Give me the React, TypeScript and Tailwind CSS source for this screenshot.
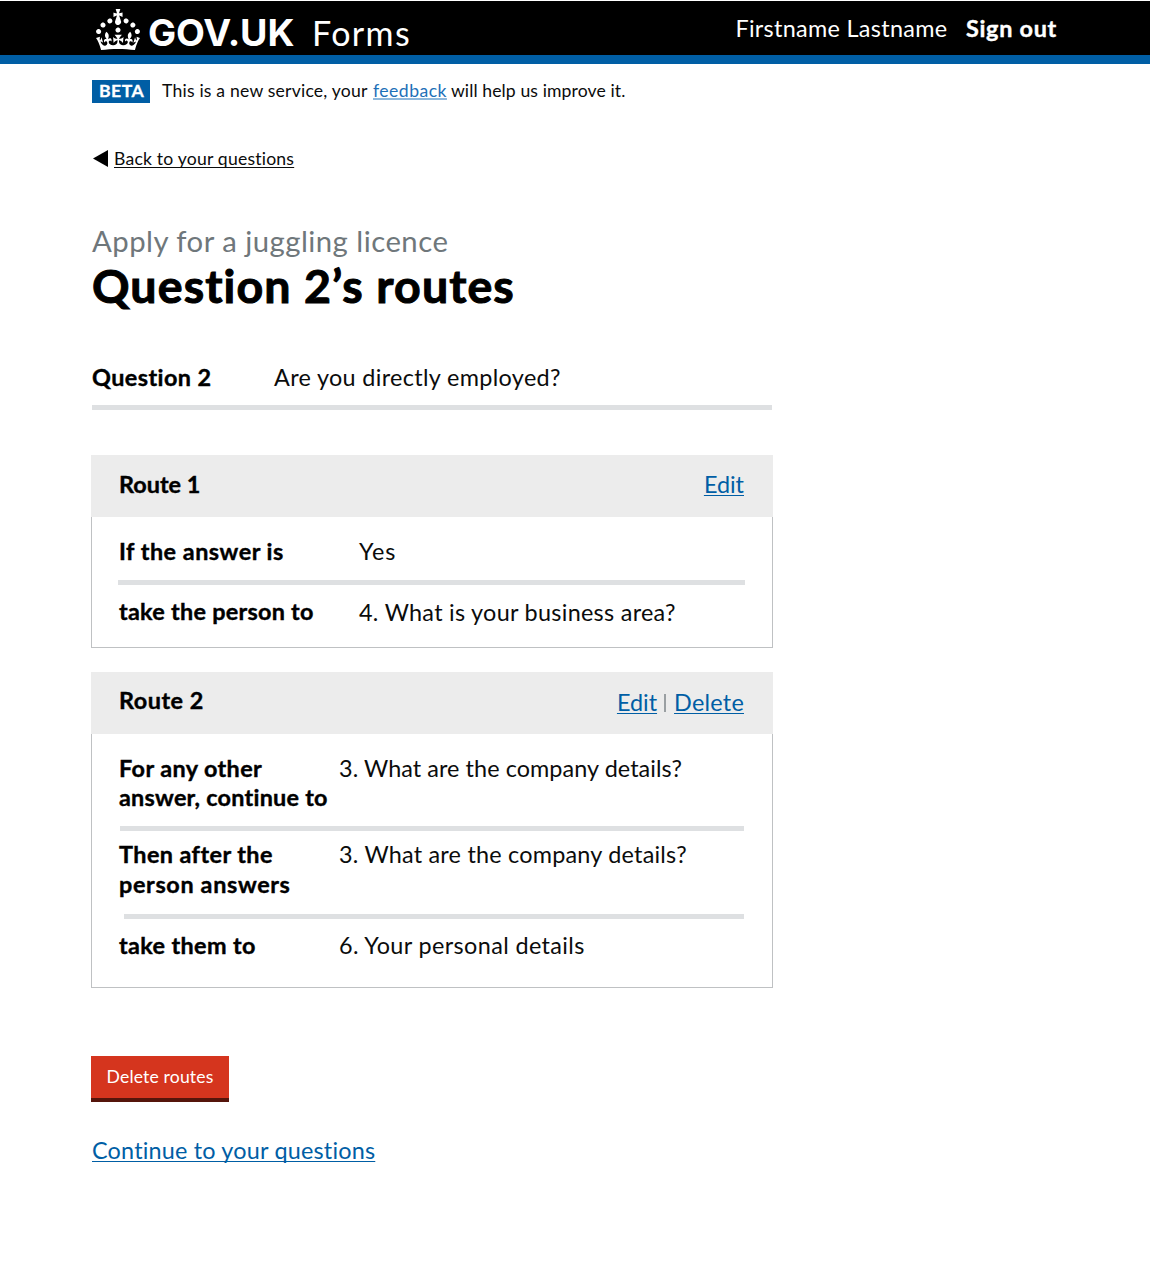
import type { ReactNode } from "react";

const LINK =
  "text-[#005ea5] underline decoration-1 underline-offset-2 [text-decoration-skip-ink:none]";

const BOLD = "font-bold text-black [-webkit-text-stroke:0.4px_#000]";

function Crown() {
  return (
    <svg viewBox="0 0 32 30" preserveAspectRatio="none" className="h-[41px] w-[44px]" fill="#fff" aria-hidden="true">
      <path d="M22.6 10.4c-1 .4-2-.1-2.4-1-.4-.9.1-2 1-2.4.9-.4 2 .1 2.4 1s-.1 2-1 2.4m-5.9 6.7c-.9.4-2-.1-2.4-1-.4-.9.1-2 1-2.4.9-.4 2 .1 2.4 1s-.1 2-1 2.4m10.8-3.7c-1 .4-2-.1-2.4-1-.4-.9.1-2 1-2.4.9-.4 2 .1 2.4 1s0 2-1 2.4m3.3 4.8c-1 .4-2-.1-2.4-1-.4-.9.1-2 1-2.4.9-.4 2 .1 2.4 1s-.1 2-1 2.4M17 4.7l2.3 1.2V2.5l-2.3.7-.2-.2.9-3h-3.4l.9 3-.2.2c-.1.1-2.3-.7-2.3-.7v3.4L15 4.7c.1.1.1.2.2.2l-1.3 4c-.1.2-.1.4-.1.6 0 1.1.8 2 1.9 2.2h.7c1-.2 1.9-1.1 1.9-2.1 0-.2 0-.4-.1-.6l-1.3-4c-.1-.2.1-.3.1-.3m-7.6 5.7c.9.4 2-.1 2.4-1 .4-.9-.1-2-1-2.4-.9-.4-2 .1-2.4 1s0 2 1 2.4m-5 3c.9.4 2-.1 2.4-1 .4-.9-.1-2-1-2.4-.9-.4-2 .1-2.4 1s.1 2 1 2.4m-3.2 4.8c.9.4 2-.1 2.4-1 .4-.9-.1-2-1-2.4-.9-.4-2 .1-2.4 1s0 2 1 2.4m14.8 11c4.4 0 8.6.3 12.3.8 1.1-4.5 2.4-7 3.7-8.8l-2.5-.9c.2 1.3.3 1.9 0 2.7-.4-.4-.8-1.1-1.1-2.3l-1.2 4c.7-.5 1.3-.8 2-.9-1.1 2.5-2.6 3.1-3.5 3-1.1-.2-1.7-1.2-1.5-2.1.3-1.2 1.5-1.5 2.1-.1 1.1-2.3-.8-3-2-2.3 1.9-1.9 2.1-3.5.6-5.6-2.1 1.6-2.1 3.2-1.2 5.5-1.2-1.4-3.2-.6-2.5 1.6.9-1.4 2.1-.5 1.9.8-.2 1.1-1.7 2.1-3.5 1.9-2.7-.2-2.9-2.1-2.9-3.6.7-.1 1.9.5 2.9 1.9l.4-4.3c-1.1 1.1-2.1 1.4-3.2 1.4.4-1.2 2.1-3 2.1-3h-5.4s1.7 1.9 2.1 3c-1.1 0-2.1-.2-3.2-1.4l.4 4.3c1-1.4 2.2-2 2.9-1.9-.1 1.5-.2 3.4-2.9 3.6-1.9.2-3.4-.8-3.5-1.9-.2-1.3 1-2.2 1.9-.8.7-2.3-1.2-3-2.5-1.6.9-2.2.9-3.9-1.2-5.5-1.5 2-1.3 3.7.6 5.6-1.2-.7-3.1 0-2 2.3.6-1.4 1.8-1.1 2.1.1.2.9-.3 1.9-1.5 2.1-.9.2-2.4-.5-3.5-3 .6 0 1.2.3 2 .9l-1.2-4c-.3 1.1-.7 1.9-1.1 2.3-.3-.8-.2-1.4 0-2.7l-2.9.9C1.3 23 2.6 25.5 3.7 30c3.7-.5 7.9-.8 12.3-.8" />
    </svg>
  );
}

function Card({ className, header, children }: { className: string; header: ReactNode; children: ReactNode }) {
  return (
    <section className={`flex w-[682px] flex-col ${className}`}>
      <div className="flex shrink-0 items-start justify-between bg-[#ececec] pr-[29px] pl-7">{header}</div>
      <div className="grow border border-t-0 border-[#bfc1c3] pr-7 pl-[27px]">{children}</div>
    </section>
  );
}

function Rule({ className }: { className: string }) {
  return <div className={`h-[5px] bg-[#dee0e2] ${className}`} />;
}

export default function App() {
  return (
    <div className="h-[1288px] w-[1150px] overflow-hidden bg-white pt-px font-['Lato',sans-serif] text-[23.4px] leading-[30px] text-[#0b0c0c]">
      <header className="flex h-[63px] items-start justify-between border-b-[9px] border-[#005ea5] bg-black pr-[93px] pl-24 text-white">
        <div className="flex items-start">
          <div className="pt-2">
            <Crown />
          </div>
          <span className="mt-[9px] ml-2 w-[164px] font-['Inter',sans-serif] text-[37.5px] leading-[46px] font-bold tracking-[-0.1px]">
            GOV.UK
          </span>
          <span className="mt-[11px] text-[34px] leading-[41px] tracking-[1.4px] whitespace-nowrap">Forms</span>
        </div>
        <div className="flex whitespace-nowrap pt-3">
          <span className="mr-[18.5px] tracking-[0.31px]">Firstname Lastname</span>
          <span className="font-bold tracking-[0.72px] [-webkit-text-stroke:0.4px_#fff]">Sign out</span>
        </div>
      </header>

      <main className="pl-[92px] whitespace-nowrap">
        <div className="mt-4 flex h-[23px] items-start text-[17.6px] leading-[21px]">
          <strong className="mr-3 h-[23px] w-[58px] bg-[#005ea5] pl-[7px] font-bold tracking-[0.5px] text-white [-webkit-text-stroke:0.3px_#fff]">
            BETA
          </strong>
          <span className="w-[211px] tracking-[0.2px]">This is a new service, your</span>
          <a className="mr-1 tracking-[0.46px] text-[#1d70b8] underline decoration-[#8eb8dc] decoration-2 underline-offset-1 [text-decoration-skip-ink:none]">
            feedback
          </a>
          <span className="tracking-[0.1px]">will help us improve it.</span>
        </div>

        <a className="mt-[45px] flex h-[21px] items-start text-[17.6px] leading-[21px]">
          <svg viewBox="0 0 15 17" className="mt-0.5 mr-1.5 ml-px h-[17px] w-[15px] text-black" fill="currentColor" aria-hidden="true">
            <path d="M0 8.5 15 0V17Z" />
          </svg>
          <span className="tracking-[0.2px] underline decoration-1 underline-offset-2 [text-decoration-skip-ink:none]">
            Back to your questions
          </span>
        </a>

        <p className="mt-[54px] text-[29.3px] leading-[35px] tracking-[0.48px] text-[#6f777b]">Apply for a juggling licence</p>
        <h1 className="text-[46.5px] leading-[54px] font-bold tracking-[1.1px] text-black [-webkit-text-stroke:1px_#000]">
          Question 2’s routes
        </h1>

        <div className="mt-[50px] flex h-[43px]">
          <strong className={`${BOLD} w-[182px] tracking-[0.43px]`}>Question 2</strong>
          <span className="tracking-[0.34px]">Are you directly employed?</span>
        </div>
        <Rule className="w-[680px]" />

        <div className="-ml-px">
          <Card
            className="mt-[45px] h-[193px]"
            header={
              <>
                <h2 className={`${BOLD} h-[62px] pt-3.5 tracking-0`}>Route 1</h2>
                <a className={`${LINK} mt-3.5 tracking-0`}>Edit</a>
              </>
            }
          >
            <div className="flex h-[63px] pt-[19px]">
              <strong className={`${BOLD} w-[240px] tracking-[0.5px]`}>If the answer is</strong>
              <span className="tracking-[0.9px]">Yes</span>
            </div>
            <Rule className="-mr-[0.5px] -ml-px" />
            <div className="flex pt-[11px]">
              <strong className={`${BOLD} w-[240px] tracking-[0.27px]`}>take the person to</strong>
              <span className="mt-px tracking-[0.29px]">4. What is your business area?</span>
            </div>
          </Card>

          <Card
            className="mt-6 h-[316px]"
            header={
              <>
                <h2 className={`${BOLD} h-[62px] pt-[13px] tracking-[0.5px]`}>Route 2</h2>
                <div className="flex pt-[15px]">
                  <a className={`${LINK} tracking-0`}>Edit</a>
                  <i className="mr-2 ml-[7px] mt-[7px] h-[18px] w-[2px] bg-[#9a9fa2]" />
                  <a className={`${LINK} tracking-[0.25px]`}>Delete</a>
                </div>
              </>
            }
          >
            <div className="flex h-[92px] pt-[19px]">
              <strong className={`${BOLD} mt-px w-[220px] leading-[29px]`}>
                <span className="tracking-[0.4px]">For any other</span>
                <br />
                <span className="tracking-[0.24px]">answer, continue to</span>
              </strong>
              <span className="tracking-[0.07px]">3. What are the company details?</span>
            </div>
            <Rule className="ml-px" />
            <div className="flex h-[83px] pt-2">
              <strong className={`${BOLD} w-[220px]`}>
                <span className="tracking-[0.43px]">Then after the</span>
                <br />
                <span className="tracking-[0.65px]">person answers</span>
              </strong>
              <span className="tracking-[0.22px]">3. What are the company details?</span>
            </div>
            <Rule className="ml-[5px]" />
            <div className="flex pt-[11px]">
              <strong className={`${BOLD} w-[220px] tracking-[0.37px]`}>take them to</strong>
              <span className="tracking-[0.38px]">6. Your personal details</span>
            </div>
          </Card>

          <button className="mt-[68px] block h-[46px] w-[138px] border-b-4 border-[#55150b] bg-[#d5351e] pb-0.5 text-[17.6px] leading-[21px] tracking-[0.15px] text-white">
            Delete routes
          </button>
        </div>

        <a className={`${LINK} mt-[33px] inline-block tracking-[0.2px]`}>Continue to your questions</a>
      </main>
    </div>
  );
}
